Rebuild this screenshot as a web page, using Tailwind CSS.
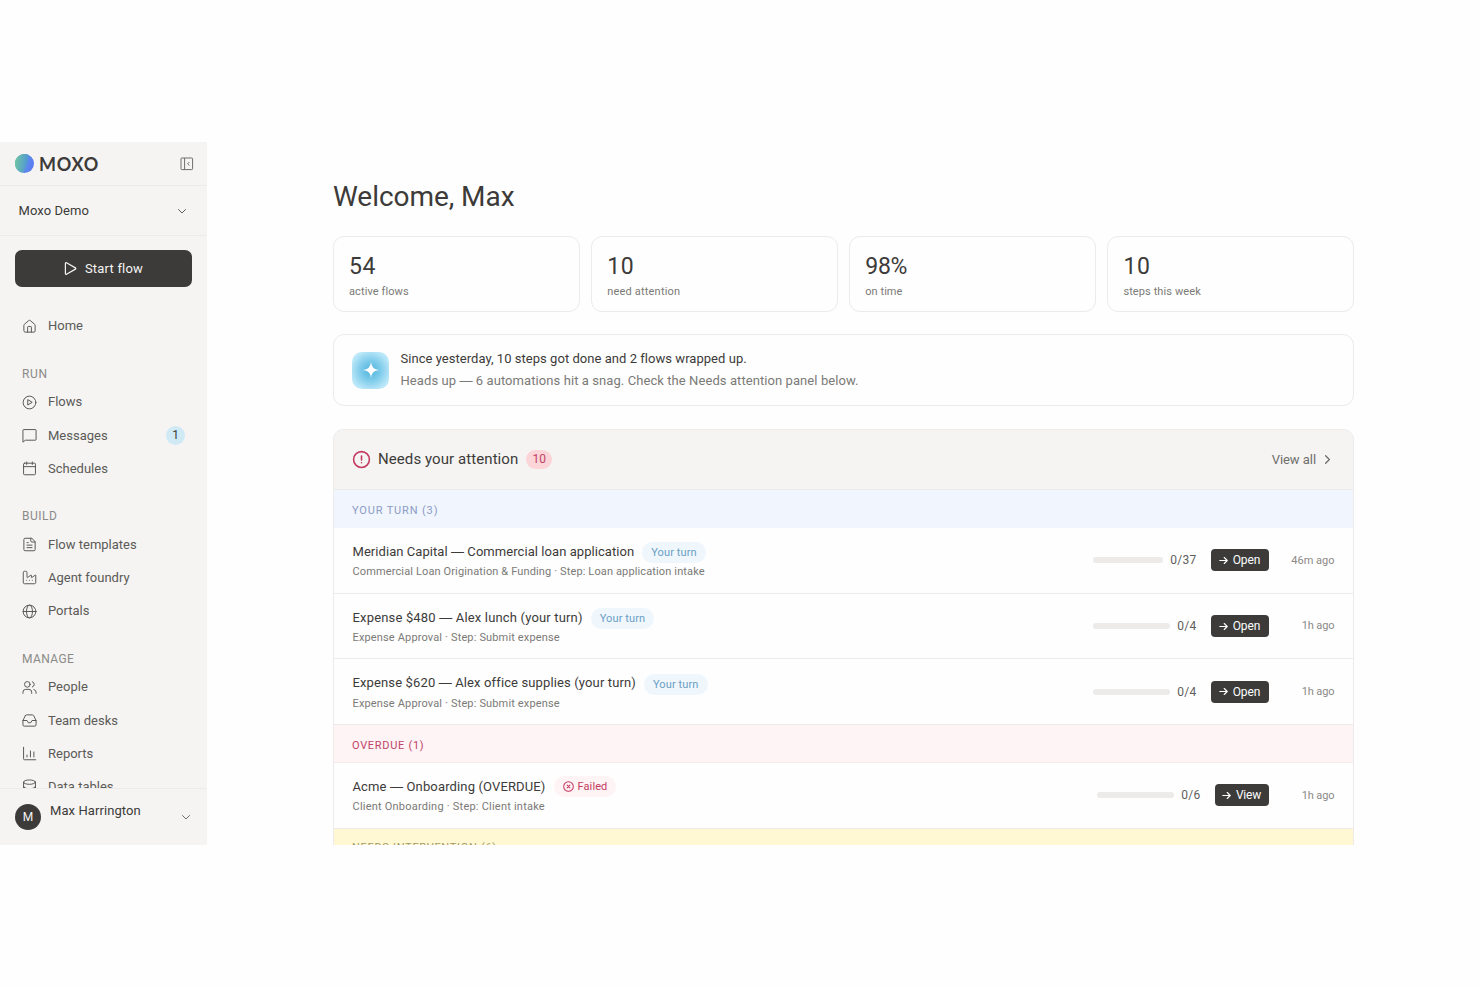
<!DOCTYPE html>
<html lang="en">
  <head>
    <meta charset="UTF-8" />
    <meta name="viewport" content="width=device-width, initial-scale=1.0" />
    <title>Moxo</title>
    <script src="https://cdn.jsdelivr.net/npm/@tailwindcss/browser@4"></script>
  </head>
  <body class="bg-[#fefefe] h-[987px] overflow-hidden py-[142px] font-['Roboto','Liberation_Sans',sans-serif] text-[#3c3b39]">
    <div class="flex h-[703px] overflow-hidden">
      <!-- SIDEBAR -->
      <aside class="w-[207px] shrink-0 flex flex-col bg-[#f5f4f3]">
        <div class="h-11 shrink-0 flex items-center pl-[15px] pr-[13px] border-b border-[#ecebea]">
          <svg class="size-[19px]" viewBox="0 0 20 20">
            <defs>
              <linearGradient id="logoLeft" x1="0" y1="0" x2="1" y2="0.2">
                <stop offset="0" stop-color="#72c99c" />
                <stop offset="1" stop-color="#4f97d6" />
              </linearGradient>
              <linearGradient id="logoRight" x1="0" y1="0" x2="1" y2="0.3">
                <stop offset="0" stop-color="#64b0d8" />
                <stop offset="1" stop-color="#5a7cf0" />
              </linearGradient>
            </defs>
            <circle cx="10" cy="10" r="10" fill="url(#logoRight)" />
            <path d="M14.500 1.100A10 10 0 1 0 8 19.800Q13 12 14.500 1.100z" fill="url(#logoLeft)" />
          </svg>
          <span class="ml-[5px] font-['Lato',sans-serif] font-bold text-[18px] leading-none tracking-[0.7px]">MOXO</span>
          <svg class="ml-auto size-[14px] text-[#6f6e6b]" fill="none" viewBox="0 0 14 14" stroke="currentColor">
            <rect x="1" y="1" width="11.600" height="11.600" rx="0.8" />
            <path d="M4.600 1v11.600M9.400 5L7.600 6.800l1.800 1.800" />
          </svg>
        </div>
        <div class="h-[50px] shrink-0 flex items-center pl-[18.5px] pr-[19px] border-b border-[#ecebea]">
          <span class="text-[13px] tracking-[0.08px]">Moxo Demo</span>
          <svg class="ml-auto size-3 text-[#5f5e5b]" fill="none" viewBox="0 0 24 24" stroke="currentColor" stroke-width="2" stroke-linecap="round" stroke-linejoin="round"><path d="m5 9 7 7 7-7" /></svg>
        </div>

        <nav class="flex-1 min-h-0 overflow-hidden px-[15px] pt-[14px] text-[13px] text-[#5b5a57]">
          <button class="w-[177px] h-[37px] flex items-center justify-center gap-2 rounded-[7px] bg-[#3c3b39] text-[#f5f4f3] tracking-[0.2px]">
            <svg class="size-[13px]" fill="none" viewBox="0 0 14 14" stroke="currentColor" stroke-width="1.300" stroke-linejoin="round"><path d="M1.500 1.600v10.800a.8.8 0 0 0 1.200.7l9.600-5.400a.8.8 0 0 0 0-1.400L2.700.9a.8.8 0 0 0-1.200.7z" /></svg>
            Start flow
          </button>

          <a class="mt-[22.6px] h-[33.25px] flex items-center gap-[11px] pl-[7px]">
            <svg class="size-[15px]" fill="none" viewBox="0 0 24 24" stroke="currentColor" stroke-width="1.6" stroke-linecap="round" stroke-linejoin="round"><path d="M15 21v-8a1 1 0 0 0-1-1h-4a1 1 0 0 0-1 1v8" /><path d="M3 10a2 2 0 0 1 .7-1.500l7-6a2 2 0 0 1 2.600 0l7 6A2 2 0 0 1 21 10v9a2 2 0 0 1-2 2H5a2 2 0 0 1-2-2z" /></svg>
            Home
          </a>

          <h3 class="h-[42.75px] pt-[24px] pl-[7px] text-[12px] leading-[15px] tracking-[0.6px] text-[#8b8a87]">RUN</h3>
          <a class="h-[33.25px] flex items-center gap-[11px] pl-[7px]">
            <svg class="size-[15px]" fill="none" viewBox="0 0 24 24" stroke="currentColor" stroke-width="1.6" stroke-linecap="round" stroke-linejoin="round"><circle cx="12" cy="12" r="10.2" /><path d="M9.200 8v8l6.600-4z" /></svg>
            Flows
          </a>
          <a class="h-[33.25px] flex items-center gap-[11px] pl-[7px]">
            <svg class="size-[15px]" fill="none" viewBox="0 0 24 24" stroke="currentColor" stroke-width="1.6" stroke-linecap="round" stroke-linejoin="round"><path d="M1.500 22V3.500a1 1 0 0 1 1-1h19a1 1 0 0 1 1 1v15a1 1 0 0 1-1 1H6z" /></svg>
            Messages
            <span class="ml-auto mr-[7px] size-[19px] rounded-full bg-[#cfe9f5] text-[#3c3b39] text-[12px] leading-[19px] text-center">1</span>
          </a>
          <a class="h-[33.25px] flex items-center gap-[11px] pl-[7px]">
            <svg class="size-[15px]" fill="none" viewBox="0 0 24 24" stroke="currentColor" stroke-width="1.6" stroke-linecap="round" stroke-linejoin="round"><path d="M7.500 1.500v4M16.500 1.500v4M2.500 9h19" /><rect x="2.500" y="3.500" width="19" height="18.500" rx="1.500" /></svg>
            Schedules
          </a>

          <h3 class="h-[42.75px] pt-[24px] pl-[7px] text-[12px] leading-[15px] tracking-[0.5px] text-[#8b8a87]">BUILD</h3>
          <a class="h-[33.25px] flex items-center gap-[11px] pl-[7px]">
            <svg class="size-[15px]" fill="none" viewBox="0 0 24 24" stroke="currentColor" stroke-width="1.6" stroke-linecap="round" stroke-linejoin="round"><path d="M15 2H5a2 2 0 0 0-2 2v16a2 2 0 0 0 2 2h14a2 2 0 0 0 2-2V8z" /><path d="M14 2v4a2 2 0 0 0 2 2h5M10 9H8M16 13H8M16 17H8" /></svg>
            Flow templates
          </a>
          <a class="h-[33.25px] flex items-center gap-[11px] pl-[7px]">
            <svg class="size-[15px]" fill="none" viewBox="0 0 24 24" stroke="currentColor" stroke-width="1.6" stroke-linecap="round" stroke-linejoin="round"><path d="M12 16.500h.01M16.500 16.500h.01M7.500 16.500h.01" /><path d="M2 20a2 2 0 0 0 2 2h16a2 2 0 0 0 2-2V8.500a.5.5 0 0 0-.8-.4l-5.400 4a.5.5 0 0 1-.8-.4v-3.200a.5.5 0 0 0-.8-.4l-5.400 4a.5.5 0 0 1-.8-.4V4a2 2 0 0 0-2-2H4a2 2 0 0 0-2 2z" /></svg>
            Agent foundry
          </a>
          <a class="h-[33.25px] flex items-center gap-[11px] pl-[7px]">
            <svg class="size-[15px]" fill="none" viewBox="0 0 24 24" stroke="currentColor" stroke-width="1.6" stroke-linecap="round" stroke-linejoin="round"><circle cx="12" cy="12" r="10.2" /><ellipse cx="12" cy="12" rx="4.800" ry="10.200" /><path d="M1.800 12h20.400" /></svg>
            Portals
          </a>

          <h3 class="h-[42.75px] pt-[24px] pl-[7px] text-[12px] leading-[15px] tracking-[0.4px] text-[#8b8a87]">MANAGE</h3>
          <a class="h-[33.25px] flex items-center gap-[11px] pl-[7px]">
            <svg class="size-[15px]" fill="none" viewBox="0 0 24 24" stroke="currentColor" stroke-width="1.6" stroke-linecap="round" stroke-linejoin="round"><circle cx="8.500" cy="7" r="4.500" /><path d="M1.500 21.500v-2a4.500 4.500 0 0 1 4.500-4.500h5a4.500 4.500 0 0 1 4.500 4.500v2M16.500 2.800a4.400 4.400 0 0 1 0 8.400M19 15.200a4.500 4.500 0 0 1 3.500 4.300v2" /></svg>
            People
          </a>
          <a class="h-[33.25px] flex items-center gap-[11px] pl-[7px]">
            <svg class="size-[15px]" fill="none" viewBox="0 0 24 24" stroke="currentColor" stroke-width="1.6" stroke-linecap="round" stroke-linejoin="round"><path d="M22.500 12H16l-2 3.500h-4L8 12H1.500" /><path d="M5.400 4.100 1.500 12v7a2 2 0 0 0 2 2h17a2 2 0 0 0 2-2v-7l-3.900-7.900A2 2 0 0 0 16.800 3H7.200a2 2 0 0 0-1.800 1.100z" /></svg>
            Team desks
          </a>
          <a class="h-[33.25px] flex items-center gap-[11px] pl-[7px]">
            <svg class="size-[15px]" fill="none" viewBox="0 0 24 24" stroke="currentColor" stroke-width="1.6" stroke-linecap="round" stroke-linejoin="round"><path d="M2.500 2v18.500a1.500 1.500 0 0 0 1.500 1.500h18M8 17.500v-3M13.500 17.500V8M19 17.500v-8" /></svg>
            Reports
          </a>
          <a class="h-[33.25px] flex items-center gap-[11px] pl-[7px]">
            <svg class="size-[15px]" fill="none" viewBox="0 0 24 24" stroke="currentColor" stroke-width="1.6" stroke-linecap="round" stroke-linejoin="round"><ellipse cx="12" cy="5" rx="9.500" ry="3.500" /><path d="M2.500 5v14c0 2 4 3.500 9.500 3.500s9.500-1.500 9.500-3.500V5M2.500 12c0 2 4 3.500 9.500 3.500s9.500-1.500 9.500-3.500" /></svg>
            Data tables
          </a>
        </nav>

        <div class="h-[57px] shrink-0 flex pl-[15px] pr-[15px] border-t border-[#ecebea]">
          <span class="mt-[15px] size-[26px] rounded-full bg-[#3c3b39] text-[#f5f4f3] text-[12px] leading-[26px] text-center">M</span>
          <span class="mt-[11px] ml-[9px] text-[13px] leading-[21px] tracking-[0.08px]">Max Harrington</span>
          <svg class="mt-[22px] ml-auto size-3 text-[#6f6e6b]" fill="none" viewBox="0 0 24 24" stroke="currentColor" stroke-width="2" stroke-linecap="round" stroke-linejoin="round"><path d="m5 9 7 7 7-7" /></svg>
        </div>
      </aside>

      <!-- MAIN -->
      <main class="flex-1 min-w-0 overflow-hidden bg-[#fefefe]">
        <div class="w-[1021px] mx-auto pt-[34px]">
          <h1 class="h-[60px] text-[28px] leading-[42px] -tracking-[0.05px]">Welcome, Max</h1>

          <!-- stats -->
          <div class="grid grid-cols-4 gap-[11.5px]">
            <div class="h-[76px] rounded-[11px] border border-[#ecebea] pl-[15px] pt-[15px]">
              <div class="text-[23px] leading-[30px] tracking-[0.6px]">54</div>
              <div class="mt-[2px] text-[11px] leading-[16px] tracking-[0.1px] text-[#7b7a77]">active flows</div>
            </div>
            <div class="h-[76px] rounded-[11px] border border-[#ecebea] pl-[15px] pt-[15px]">
              <div class="text-[23px] leading-[30px] tracking-[0.6px]">10</div>
              <div class="mt-[2px] text-[11px] leading-[16px] tracking-[0.2px] text-[#7b7a77]">need attention</div>
            </div>
            <div class="h-[76px] rounded-[11px] border border-[#ecebea] pl-[15px] pt-[15px]">
              <div class="text-[23px] leading-[30px] -tracking-[0.3px]">98%</div>
              <div class="mt-[2px] text-[11px] leading-[16px] tracking-[0.05px] text-[#7b7a77]">on time</div>
            </div>
            <div class="h-[76px] rounded-[11px] border border-[#ecebea] pl-[15px] pt-[15px]">
              <div class="text-[23px] leading-[30px] tracking-[0.6px]">10</div>
              <div class="mt-[2px] text-[11px] leading-[16px] tracking-[0.1px] text-[#7b7a77]">steps this week</div>
            </div>
          </div>

          <!-- summary -->
          <div class="mt-[22px] h-[72px] flex items-center gap-[11.5px] rounded-[11px] border border-[#ecebea] pl-[18px]">
            <div class="size-[37px] rounded-[10px] flex items-center justify-center bg-[radial-gradient(circle,#4fb4dd_0%,#80cceb_40%,#b8e6f8_75%,#c8eefb_100%)]">
              <svg class="size-4" viewBox="0 0 16 16" fill="#fff"><path d="M8 0Q8.600 7.400 16 8 8.600 8.600 8 16 7.400 8.600 0 8 7.400 7.400 8 0z" /><path d="M8 4.500Q8.800 7.200 11.500 8 8.800 8.800 8 11.500 7.200 8.800 4.500 8 7.200 7.200 8 4.500z" stroke="#fff" stroke-width=".8" /></svg>
            </div>
            <div class="text-[13px] leading-[22px]">
              <p class="tracking-[0.04px]">Since yesterday, 10 steps got done and 2 flows wrapped up.</p>
              <p class="tracking-[0.08px] text-[#7b7a77]">Heads up <span class="font-['Liberation_Sans',sans-serif]">—</span> 6 automations hit a snag. Check the Needs attention panel below.</p>
            </div>
          </div>

          <!-- attention panel -->
          <section class="mt-[23px] rounded-t-[11px] border border-b-0 border-[#ecebea] overflow-hidden">
            <div class="h-[60px] flex items-center bg-[#f5f4f3] border-b border-[#ecebea] pl-[18px] pr-[19px]">
              <svg class="size-[19px] text-[#c43a60]" fill="none" viewBox="0 0 24 24" stroke="currentColor" stroke-width="2" stroke-linecap="round"><circle cx="12" cy="12" r="10" /><path d="M12 7.500v5M12 16h.01" /></svg>
              <h2 class="ml-[7px] text-[15px] tracking-[0.08px]">Needs your attention</h2>
              <span class="ml-2 h-[19px] w-[26px] rounded-full bg-[#fbd5d7] text-[#c04468] text-[12px] leading-[19px] text-center">10</span>
              <a class="ml-auto flex items-center gap-[5px] text-[13px] -tracking-[0.05px] text-[#6f6e6b]">
                View all
                <svg class="size-[13px]" fill="none" viewBox="0 0 24 24" stroke="currentColor" stroke-width="2.400" stroke-linecap="round" stroke-linejoin="round"><path d="m8.500 19 7-7-7-7" /></svg>
              </a>
            </div>

            <h3 class="h-[38px] bg-[#f1f5fe] pl-[18px] pt-[2px] text-[11px] leading-[38px] tracking-[0.85px] text-[#8c9cc4]">YOUR TURN (3)</h3>

            <div class="h-[65.700px] flex items-center border-b border-[#ecebea] pl-[18.500px] pr-[18.500px]">
              <div class="flex-1 pt-px">
                <div class="flex items-center gap-2 h-[21px]">
                  <span class="text-[13px] tracking-[0.06px]">Meridian Capital <span class="font-['Liberation_Sans',sans-serif]">—</span> Commercial loan application</span>
                  <span class="mt-[2px] h-[21px] px-[9px] rounded-full bg-[#eff6fc] text-[#6b9fc4] text-[11px] leading-[21px] tracking-[0.12px]">Your turn</span>
                </div>
                <div class="mt-[1px] text-[11px] leading-[17px] tracking-[0.13px] text-[#7b7a77]">Commercial Loan Origination &amp; Funding · Step: Loan application intake</div>
              </div>
              <div class="w-[104px] flex items-center gap-[7px]">
                <div class="flex-1 h-[6px] rounded-full bg-[#ecebea]"></div>
                <span class="text-[12px] tracking-[0.25px] text-[#5f5e5b]">0/37</span>
              </div>
              <button class="ml-[14px] h-[22px] w-[58px] flex items-center justify-center gap-[5px] rounded-[4px] bg-[#3c3b39] text-[#fefefe] text-[12px] -tracking-[0.1px]">
                <svg class="size-[9px]" fill="none" viewBox="0 0 12 12" stroke="currentColor" stroke-width="1.500" stroke-linecap="round" stroke-linejoin="round"><path d="M1 6h10M7 2l4 4-4 4" /></svg>
                Open
              </button>
              <span class="w-[66px] pt-px text-right text-[11px] text-[#8b8a87]">46m ago</span>
            </div>

            <div class="h-[65.700px] flex items-center border-b border-[#ecebea] pl-[18.500px] pr-[18.500px]">
              <div class="flex-1 pt-px">
                <div class="flex items-center gap-2 h-[21px]">
                  <span class="text-[13px] tracking-[0.17px]">Expense $480 <span class="font-['Liberation_Sans',sans-serif]">—</span> Alex lunch (your turn)</span>
                  <span class="mt-[2px] h-[21px] px-[9px] rounded-full bg-[#eff6fc] text-[#6b9fc4] text-[11px] leading-[21px] tracking-[0.12px]">Your turn</span>
                </div>
                <div class="mt-[1px] text-[11px] leading-[17px] tracking-[0.15px] text-[#7b7a77]">Expense Approval · Step: Submit expense</div>
              </div>
              <div class="w-[104px] flex items-center gap-[7px]">
                <div class="flex-1 h-[6px] rounded-full bg-[#ecebea]"></div>
                <span class="text-[12px] tracking-[0.25px] text-[#5f5e5b]">0/4</span>
              </div>
              <button class="ml-[14px] h-[22px] w-[58px] flex items-center justify-center gap-[5px] rounded-[4px] bg-[#3c3b39] text-[#fefefe] text-[12px] -tracking-[0.1px]">
                <svg class="size-[9px]" fill="none" viewBox="0 0 12 12" stroke="currentColor" stroke-width="1.500" stroke-linecap="round" stroke-linejoin="round"><path d="M1 6h10M7 2l4 4-4 4" /></svg>
                Open
              </button>
              <span class="w-[66px] pt-px text-right text-[11px] -tracking-[0.1px] text-[#8b8a87]">1h ago</span>
            </div>

            <div class="h-[65.700px] flex items-center border-b border-[#ecebea] pl-[18.500px] pr-[18.500px]">
              <div class="flex-1 pt-px">
                <div class="flex items-center gap-2 h-[21px]">
                  <span class="text-[13px] tracking-[0.13px]">Expense $620 <span class="font-['Liberation_Sans',sans-serif]">—</span> Alex office supplies (your turn)</span>
                  <span class="mt-[2px] h-[21px] px-[9px] rounded-full bg-[#eff6fc] text-[#6b9fc4] text-[11px] leading-[21px] tracking-[0.12px]">Your turn</span>
                </div>
                <div class="mt-[1px] text-[11px] leading-[17px] tracking-[0.15px] text-[#7b7a77]">Expense Approval · Step: Submit expense</div>
              </div>
              <div class="w-[104px] flex items-center gap-[7px]">
                <div class="flex-1 h-[6px] rounded-full bg-[#ecebea]"></div>
                <span class="text-[12px] tracking-[0.25px] text-[#5f5e5b]">0/4</span>
              </div>
              <button class="ml-[14px] h-[22px] w-[58px] flex items-center justify-center gap-[5px] rounded-[4px] bg-[#3c3b39] text-[#fefefe] text-[12px] -tracking-[0.1px]">
                <svg class="size-[9px]" fill="none" viewBox="0 0 12 12" stroke="currentColor" stroke-width="1.500" stroke-linecap="round" stroke-linejoin="round"><path d="M1 6h10M7 2l4 4-4 4" /></svg>
                Open
              </button>
              <span class="w-[66px] pt-px text-right text-[11px] -tracking-[0.1px] text-[#8b8a87]">1h ago</span>
            </div>

            <h3 class="h-[38px] bg-[#fef3f5] border-b border-[#f3ebec] pl-[18px] pt-[2px] text-[11px] leading-[38px] tracking-[0.7px] text-[#c04468]">OVERDUE (1)</h3>

            <div class="h-[65.700px] flex items-center border-b border-[#ecebea] pl-[18.500px] pr-[18.500px]">
              <div class="flex-1 pt-px">
                <div class="flex items-center gap-2 h-[21px]">
                  <span class="text-[13px] tracking-[0.14px]">Acme <span class="font-['Liberation_Sans',sans-serif]">—</span> Onboarding (OVERDUE)</span>
                  <span class="h-[21px] px-[9px] flex items-center gap-1 rounded-full bg-[#fef3f5] text-[#c43a60] text-[11px] tracking-[0.1px]">
                    <svg class="size-[11px]" fill="none" viewBox="0 0 24 24" stroke="currentColor" stroke-width="2.200" stroke-linecap="round"><circle cx="12" cy="12" r="10.500" /><path d="m15 9-6 6M9 9l6 6" /></svg>
                    Failed
                  </span>
                </div>
                <div class="mt-[1px] text-[11px] leading-[17px] tracking-[0.22px] text-[#7b7a77]">Client Onboarding · Step: Client intake</div>
              </div>
              <div class="w-[104px] flex items-center gap-[7px]">
                <div class="flex-1 h-[6px] rounded-full bg-[#ecebea]"></div>
                <span class="text-[12px] tracking-[0.25px] text-[#5f5e5b]">0/6</span>
              </div>
              <button class="ml-[14px] h-[22px] w-[54px] flex items-center justify-center gap-[5px] rounded-[4px] bg-[#3c3b39] text-[#fefefe] text-[12px] -tracking-[0.2px]">
                <svg class="size-[9px]" fill="none" viewBox="0 0 12 12" stroke="currentColor" stroke-width="1.500" stroke-linecap="round" stroke-linejoin="round"><path d="M1 6h10M7 2l4 4-4 4" /></svg>
                View
              </button>
              <span class="w-[66px] pt-px text-right text-[11px] -tracking-[0.1px] text-[#8b8a87]">1h ago</span>
            </div>

            <h3 class="h-[38px] bg-[#fff8d2] pl-[18px] text-[11px] leading-[38px] tracking-[0.7px] text-[#a39a6c]">NEEDS INTERVENTION (6)</h3>
          </section>
        </div>
      </main>
    </div>
  </body>
</html>
